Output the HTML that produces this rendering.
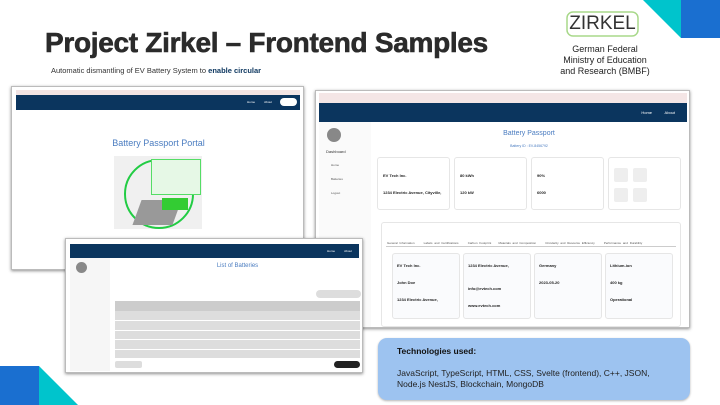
<!DOCTYPE html>
<html><head><meta charset="utf-8"><style>
*{margin:0;padding:0;box-sizing:border-box}
body{width:720px;height:405px;background:#fff;position:relative;overflow:hidden;font-family:"Liberation Sans",sans-serif}
.a{position:absolute}
.nav{background:#0b355e}
.sh{box-shadow:0 1px 3px rgba(0,0,0,.45);border:1px solid #bbb;background:#fff}
.t{font-size:3px;color:#555}
.b{font-size:4px;font-weight:bold;color:#222}
.card{background:#fff;border:1px solid #e6e6e6;border-radius:3px}
</style></head><body>
<svg class="a" style="left:0;top:0" width="720" height="405">
<polygon points="643,0 681,0 681,38" fill="#00c4cc"/>
<rect x="681" y="0" width="39" height="38" fill="#1a6fd0"/>
<rect x="0" y="366" width="39" height="39" fill="#1a6fd0"/>
<polygon points="39,366 39,405 78,405" fill="#00c4cc"/>
<rect x="567" y="12" width="71" height="24" rx="6" fill="none" stroke="#a8d88a" stroke-width="1.5"/>
</svg>
<div class="a" style="left:567px;top:13px;width:71px;text-align:center;font-size:19px;color:#333">ZIRKEL</div>
<div class="a" style="left:560px;top:44px;width:90px;text-align:center;font-size:9px;line-height:11px;color:#222">German Federal<br>Ministry of Education<br>and Research (BMBF)</div>
<div class="a" style="left:45px;top:27px;font-size:28px;font-weight:900;color:#2b2b2b;letter-spacing:-0.3px;white-space:nowrap;-webkit-text-stroke:0.6px #2b2b2b">Project Zirkel – Frontend Samples</div>
<div class="a" style="left:51px;top:66px;font-size:7.5px;color:#333">Automatic dismantling of EV Battery System to <b style="color:#0b355e">enable circular</b></div>

<div class="a sh" style="left:11px;top:86px;width:293px;height:184px">
 <div class="a" style="left:4px;top:3px;width:284px;height:5px;background:#f2e4e4"></div>
 <div class="a nav" style="left:4px;top:8px;width:284px;height:15px"><div class="a" style="right:3px;top:3px;width:17px;height:8px;background:#fff;border-radius:4px"></div><span class="a" style="right:28px;top:5px;font-size:3px;color:#fff">About</span><span class="a" style="right:45px;top:5px;font-size:3px;color:#fff">Home</span></div>
 <div class="a" style="left:0;top:51px;width:293px;text-align:center;font-size:9px;color:#4a7cc0">Battery Passport Portal</div>
 <div class="a" style="left:102px;top:69px;width:88px;height:73px;background:#f0f0f0"></div>
 <div class="a" style="left:112px;top:72px;width:70px;height:70px;border:2.5px solid #22cc44;border-radius:50%"></div>
 <div class="a" style="left:139px;top:72px;width:50px;height:36px;background:#e6f8e6;border:1.5px solid #55dd66"></div>
 <div class="a" style="left:125px;top:113px;width:40px;height:25px;background:#999;transform:skewX(-20deg)"></div>
 <div class="a" style="left:150px;top:111px;width:26px;height:12px;background:#3c3"></div>
</div>

<div class="a sh" style="left:315px;top:90px;width:375px;height:238px">
 <div class="a" style="left:3px;top:2px;width:368px;height:10px;background:#f4e6e6"></div>
 <div class="a nav" style="left:3px;top:12px;width:368px;height:19px"><span class="a" style="right:12px;top:7px;font-size:4px;color:#fff">About</span><span class="a" style="right:35px;top:7px;font-size:4px;color:#fff">Home</span></div>
 <div class="a" style="left:3px;top:31px;width:52px;height:205px;background:#fafafa"></div>
 <div class="a" style="left:11px;top:37px;width:14px;height:14px;border-radius:50%;background:#888"></div>
 <div class="a" style="left:10px;top:58px;font-size:4px;color:#333">Dashboard</div>
 <div class="a t" style="left:15px;top:72px">Home</div><div class="a t" style="left:15px;top:86px">Batteries</div><div class="a t" style="left:15px;top:100px">Logout</div>
 <div class="a" style="left:55px;top:39px;width:316px;text-align:center;font-size:7px;color:#4a7cc0">Battery Passport</div>
 <div class="a" style="left:55px;top:53px;width:316px;text-align:center;font-size:3.5px;color:#4a7cc0">Battery ID : EV-8456792</div>
 <div class="a card" style="left:61px;top:66px;width:73px;height:53px"></div>
 <div class="a card" style="left:138px;top:66px;width:73px;height:53px"></div>
 <div class="a card" style="left:215px;top:66px;width:73px;height:53px"></div>
 <div class="a card" style="left:292px;top:66px;width:73px;height:53px"></div>
 <div class="a b" style="left:67px;top:82px">EV Tech Inc.</div><div class="a b" style="left:67px;top:99px">1234 Electric Avenue, Cityville,</div>
 <div class="a b" style="left:144px;top:82px">80 kWh</div><div class="a b" style="left:144px;top:99px">120 kW</div>
 <div class="a b" style="left:221px;top:82px">90%</div><div class="a b" style="left:221px;top:99px">6000</div>
 <div class="a" style="left:298px;top:77px;width:14px;height:14px;background:#eee;border-radius:2px"></div><div class="a" style="left:317px;top:77px;width:14px;height:14px;background:#eee;border-radius:2px"></div>
 <div class="a" style="left:298px;top:97px;width:14px;height:14px;background:#eee;border-radius:2px"></div><div class="a" style="left:317px;top:97px;width:14px;height:14px;background:#eee;border-radius:2px"></div>
 <div class="a card" style="left:65px;top:131px;width:300px;height:105px"></div>
 <div class="a" style="left:70px;top:155px;width:290px;height:1px;background:#ccc"></div>
 <div class="a t" style="left:71px;top:150px;white-space:nowrap;word-spacing:1px">General Information &nbsp;&nbsp;&nbsp; Labels and Certifications &nbsp;&nbsp;&nbsp; Carbon Footprint &nbsp;&nbsp; Materials and Composition &nbsp;&nbsp;&nbsp; Circularity and Resource Efficiency &nbsp;&nbsp;&nbsp; Performance and Durability</div>
 <div class="a card" style="left:76px;top:162px;width:68px;height:66px;background:#fafbfd"></div>
 <div class="a card" style="left:147px;top:162px;width:68px;height:66px;background:#fafbfd"></div>
 <div class="a card" style="left:218px;top:162px;width:68px;height:66px;background:#fafbfd"></div>
 <div class="a card" style="left:289px;top:162px;width:68px;height:66px;background:#fafbfd"></div>
 <div class="a b" style="left:81px;top:172px">EV Tech Inc.</div><div class="a b" style="left:81px;top:189px">John Doe</div><div class="a b" style="left:81px;top:206px">1234 Electric Avenue,</div>
 <div class="a b" style="left:152px;top:172px">1234 Electric Avenue,</div><div class="a b" style="left:152px;top:195px">info@evtech.com</div><div class="a b" style="left:152px;top:212px">www.evtech.com</div>
 <div class="a b" style="left:223px;top:172px">Germany</div><div class="a b" style="left:223px;top:189px">2023-05-20</div>
 <div class="a b" style="left:294px;top:172px">Lithium-ion</div><div class="a b" style="left:294px;top:189px">400 kg</div><div class="a b" style="left:294px;top:206px">Operational</div>
</div>

<div class="a sh" style="left:65px;top:238px;width:298px;height:135px">
 <div class="a nav" style="left:4px;top:5px;width:289px;height:14px"><span class="a" style="right:7px;top:5px;font-size:3px;color:#fff">About</span><span class="a" style="right:24px;top:5px;font-size:3px;color:#fff">Home</span></div>
 <div class="a" style="left:4px;top:19px;width:40px;height:113px;background:#f6f6f6"></div>
 <div class="a" style="left:10px;top:23px;width:11px;height:11px;border-radius:50%;background:#888"></div>
 <div class="a" style="left:49px;top:24px;width:245px;text-align:center;font-size:6px;color:#4a7cc0">List of Batteries</div>
 <div class="a" style="left:250px;top:51px;width:45px;height:8px;border-radius:4px;background:#ddd"></div>
 <div class="a" style="left:49px;top:62px;width:245px;height:57px;background:#ddd"></div>
 <div class="a" style="left:49px;top:62px;width:245px;height:10px;background:#ccc"></div>
 <div class="a" style="left:49px;top:81px;width:245px;height:1px;background:#fff"></div>
 <div class="a" style="left:49px;top:91px;width:245px;height:1px;background:#fff"></div>
 <div class="a" style="left:49px;top:100px;width:245px;height:1px;background:#fff"></div>
 <div class="a" style="left:49px;top:110px;width:245px;height:1px;background:#fff"></div>
 <div class="a" style="left:49px;top:122px;width:27px;height:7px;background:#ddd;border-radius:2px"></div>
 <div class="a" style="left:268px;top:122px;width:26px;height:7px;background:#222;border-radius:4px"></div>
</div>

<div class="a" style="left:378px;top:338px;width:312px;height:62px;background:#9dc3f0;border-radius:9px;box-shadow:0 1px 2px rgba(0,0,0,.3)"></div>
<div class="a" style="left:397px;top:346px;font-size:8.5px;font-weight:bold;color:#111">Technologies used:</div>
<div class="a" style="left:397px;top:368px;width:272px;font-size:8.5px;line-height:11px;color:#222">JavaScript, TypeScript, HTML, CSS, Svelte (frontend), C++, JSON, Node.js NestJS, Blockchain, MongoDB</div>
</body></html>
